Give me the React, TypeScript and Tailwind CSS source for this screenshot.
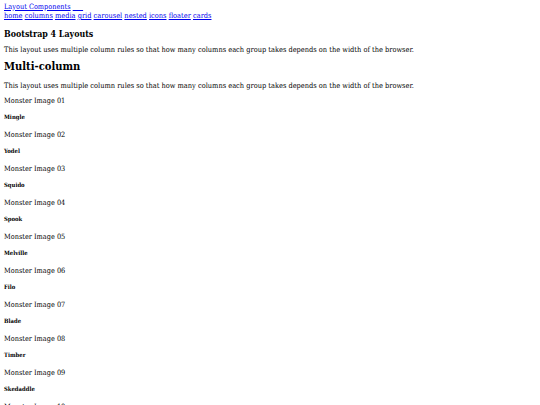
const nav = ['home', 'columns', 'media', 'grid', 'carousel', 'nested', 'icons', 'floater', 'cards'];

const monsters = [
  'Mingle',
  'Yodel',
  'Squido',
  'Spook',
  'Melville',
  'Filo',
  'Blade',
  'Timber',
  'Skedaddle',
  'Frankie',
];

export default function App() {
  return (
    <div className="h-[405px] overflow-hidden bg-white px-[4px] text-black [font-family:'DejaVu_Serif_Condensed','DejaVu_Serif',serif]">
      <div className="pt-[2px] text-[7.3px] leading-[9px]">
        <a href="#" className="text-[#0000ee] underline">Layout Components</a>{' '}
        <a href="#" className="text-[#0000ee] underline">&nbsp;&nbsp;&nbsp;&nbsp;&nbsp;</a>
      </div>
      <nav className="text-[7.4px] leading-[9px]">
        {nav.map((n, i) => (
          <span key={n}>
            <a href="#" className="text-[#0000ee] underline">{n}</a>
            {i < nav.length - 1 ? ' ' : ''}
          </span>
        ))}
      </nav>
      <h3 className="mt-[8px] text-[8.8px] font-bold leading-[12px]">Bootstrap 4 Layouts</h3>
      <p className="mt-[5px] text-[7.4px] leading-[9px]">
        This layout uses multiple column rules so that how many columns each group takes depends on the width of the browser.
      </p>
      <h2 className="mt-[5px] text-[11.1px] font-bold leading-[16px]">Multi-column</h2>
      <p className="mt-[6px] text-[7.4px] leading-[9px]">
        This layout uses multiple column rules so that how many columns each group takes depends on the width of the browser.
      </p>
      <div className="mt-[5px]">
        {monsters.map((m, i) => (
          <div key={m} className="h-[34px]">
            <div className="text-[7.3px] leading-[11px]">Monster Image {String(i + 1).padStart(2, '0')}</div>
            <h6 className="mt-[7px] text-[5.9px] font-bold leading-[8px]">{m}</h6>
          </div>
        ))}
      </div>
    </div>
  );
}
